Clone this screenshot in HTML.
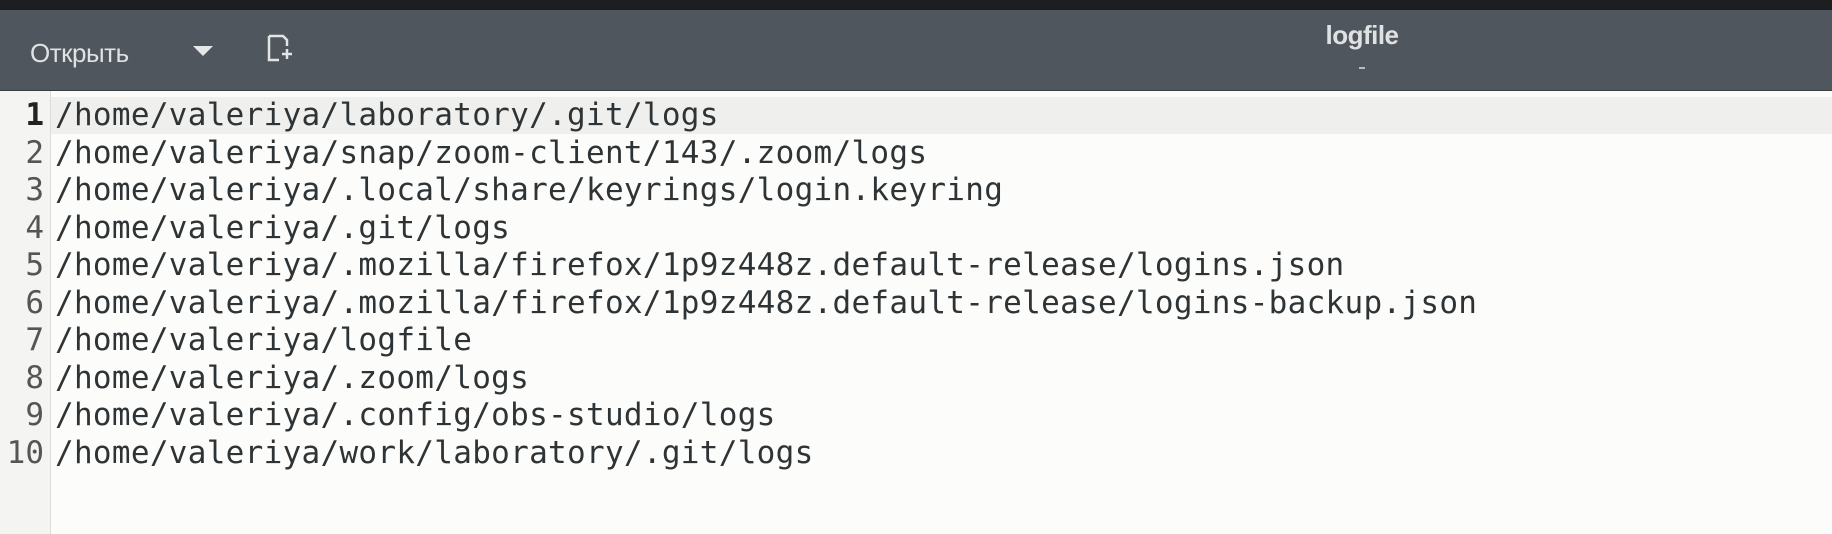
<!DOCTYPE html>
<html><head><meta charset="utf-8"><style>
html,body{margin:0;padding:0;width:1832px;height:534px;overflow:hidden;background:#fcfcfb;}
.top{position:absolute;left:0;top:0;width:1832px;height:10px;background:#1c1e20;}
.hdr{position:absolute;left:0;top:10px;width:1832px;height:80px;background:#50565e;border-bottom:1px solid #3a3e44;}
.open{position:absolute;left:30px;top:38px;font:26px "Liberation Sans",sans-serif;color:#dfe1e3;letter-spacing:-0.5px;}
.tri{position:absolute;left:193px;top:46px;width:0;height:0;border-left:10px solid transparent;border-right:10px solid transparent;border-top:10px solid #e6e7e8;}
.title{position:absolute;left:1302px;top:20px;width:120px;text-align:center;font:bold 26px "Liberation Sans",sans-serif;color:#dfe1e3;letter-spacing:-0.5px;}
.gut{position:absolute;left:0;top:91px;width:50px;height:443px;background:#f4f4f2;border-right:1px solid #dcdcda;}
.hl{position:absolute;left:51px;top:97px;width:1781px;height:37px;background:#efefed;}
.lines{position:absolute;left:0;top:97px;font:31px "DejaVu Sans Mono","Liberation Mono",monospace;line-height:37.5px;color:#2e3436;white-space:pre;letter-spacing:0.3px;}
.n{display:inline-block;width:44px;text-align:right;color:#555;margin-right:11px;letter-spacing:0;}
.n1{color:#222;font-weight:bold;}
</style></head><body>
<div class="top"></div>
<div class="hdr"></div>
<div class="open">Открыть</div>
<div class="tri"></div>
<svg style="position:absolute;left:266px;top:34px" width="32" height="30" viewBox="0 0 32 30"><path d="M3 2h14l4 4v6M3 2v24h10" fill="none" stroke="#e3e4e6" stroke-width="2.5"/><path d="M21 15v10M16 20h10" stroke="#e3e4e6" stroke-width="2.5"/></svg>
<div class="title">logfile</div>
<div style="position:absolute;left:1359px;top:67px;width:6px;height:2px;background:#bbb"></div>
<div class="gut"></div>
<div class="hl"></div>
<div class="lines"><span class="n n1">1</span>/home/valeriya/laboratory/.git/logs
<span class="n">2</span>/home/valeriya/snap/zoom-client/143/.zoom/logs
<span class="n">3</span>/home/valeriya/.local/share/keyrings/login.keyring
<span class="n">4</span>/home/valeriya/.git/logs
<span class="n">5</span>/home/valeriya/.mozilla/firefox/1p9z448z.default-release/logins.json
<span class="n">6</span>/home/valeriya/.mozilla/firefox/1p9z448z.default-release/logins-backup.json
<span class="n">7</span>/home/valeriya/logfile
<span class="n">8</span>/home/valeriya/.zoom/logs
<span class="n">9</span>/home/valeriya/.config/obs-studio/logs
<span class="n">10</span>/home/valeriya/work/laboratory/.git/logs</div>
</body></html>
